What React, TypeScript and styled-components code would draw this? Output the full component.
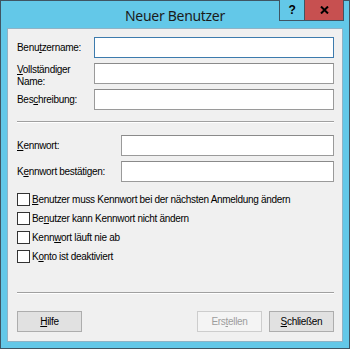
import React from 'react';
import styled, { createGlobalStyle } from 'styled-components';

const GlobalStyle = createGlobalStyle`
  html, body {
    margin: 0;
    padding: 0;
    background: #63c8e8;
  }
  * {
    box-sizing: border-box;
  }
`;

const StyledWindow = styled.div`
  width: 350px;
  height: 349px;
  display: flex;
  flex-direction: column;
  background-color: #63c8e8;
  border: 1px solid #3f5563;
  font-family: 'Liberation Sans', Arial, sans-serif;
  font-size: 10px;
  letter-spacing: -0.3px;
  color: #000;
`;

const StyledTitleBar = styled.div`
  height: 27px;
  display: grid;
  grid-template-columns: 1fr auto 1fr;
  align-items: start;
`;

const StyledTitle = styled.div`
  grid-column: 2/3;
  font-family: 'Noto Sans', 'Open Sans', sans-serif;
  font-size: 14px;
  letter-spacing: -0.3px;
  line-height: 27px;
  color: #1b1b1b;
  padding-top: 1px;
`;

const StyledControls = styled.div`
  grid-column: 3/4;
  justify-self: end;
  display: flex;
  margin-top: -1px;
  margin-right: 5px;
`;

const StyledHelpControl = styled.div`
  width: 25px;
  height: 21px;
  border: 1px solid #3f5563;
  border-top: none;
  border-right: none;
  background-color: #63c8e8;
  display: flex;
  align-items: center;
  justify-content: center;
  font-family: 'Liberation Sans', Arial, sans-serif;
  font-weight: bold;
  font-size: 12px;
  color: #000;
`;

const StyledCloseControl = styled.div`
  width: 40px;
  height: 21px;
  border: 1px solid #3f5563;
  border-top: none;
  background-color: #c75050;
  display: flex;
  align-items: center;
  justify-content: center;
`;

const StyledClient = styled.div`
  flex: 1;
  margin: 0 6px 6px 6px;
  border: 1px solid #8fb3c6;
  background-color: #f0f0f0;
  padding: 8px 8px 0 9px;
  display: flex;
  flex-direction: column;
`;

const StyledFieldGrid = styled.div<{ $labelWidth: number }>`
  display: grid;
  grid-template-columns: ${(p) => p.$labelWidth}px 1fr;
  grid-auto-rows: 21px;
  row-gap: 5px;
`;

const StyledLabel = styled.label<{ $top?: boolean }>`
  align-self: ${(p) => (p.$top ? 'start' : 'center')};
  line-height: 12px;
  margin-top: ${(p) => (p.$top ? '1px' : '0')};
`;

const StyledInput = styled.div<{ $focused?: boolean }>`
  height: 21px;
  background-color: #fff;
  border: 1px solid ${(p) => (p.$focused ? '#3d7bad' : '#9a9a9a')};
  border-top-color: ${(p) => (p.$focused ? '#3d7bad' : '#8a8a8a')};
`;

const StyledSeparator = styled.div<{ $top: number }>`
  margin-top: ${(p) => p.$top}px;
  height: 2px;
  border-top: 1px solid #a0a0a0;
  border-bottom: 1px solid #fff;
`;

const StyledCheckList = styled.div`
  margin-top: 8px;
  display: flex;
  flex-direction: column;
`;

const StyledCheckRow = styled.label`
  height: 19px;
  display: flex;
  align-items: center;
  gap: 2px;
`;

const StyledCheckbox = styled.span`
  width: 13px;
  height: 13px;
  border: 1px solid #333;
  background-color: #fff;
`;

const StyledButtonRow = styled.div`
  margin-top: 17px;
  display: flex;
  gap: 7px;
`;

const StyledButton = styled.button<{ $push?: boolean }>`
  width: 65px;
  height: 21px;
  margin-left: ${(p) => (p.$push ? 'auto' : '0')};
  padding: 0;
  background-color: #e1e1e1;
  border: 1px solid #adadad;
  font-family: inherit;
  font-size: 10px;
  letter-spacing: -0.3px;
  color: #000;
  &:disabled {
    background-color: #f4f4f4;
    border-color: #cdcdcd;
    color: #9d9d9d;
  }
`;

const Key = styled.span`
  text-decoration: underline;
`;

const App: React.FunctionComponent = () => {
  return (
    <>
      <GlobalStyle />
      <StyledWindow>
        <StyledTitleBar>
          <StyledTitle>Neuer Benutzer</StyledTitle>
          <StyledControls>
            <StyledHelpControl>?</StyledHelpControl>
            <StyledCloseControl>
              <svg width="9" height="8" viewBox="0 0 9 8">
                <path d="M1 0.5 L8 7.5 M8 0.5 L1 7.5" stroke="#000" strokeWidth="2" />
              </svg>
            </StyledCloseControl>
          </StyledControls>
        </StyledTitleBar>
        <StyledClient>
          <StyledFieldGrid $labelWidth={77}>
            <StyledLabel>
              Benu<Key>t</Key>zername:
            </StyledLabel>
            <StyledInput $focused />
            <StyledLabel $top>
              <Key>V</Key>ollständiger
              <br />
              Name:
            </StyledLabel>
            <StyledInput />
            <StyledLabel>
              Bes<Key>c</Key>hreibung:
            </StyledLabel>
            <StyledInput />
          </StyledFieldGrid>
          <StyledSeparator $top={11} />
          <StyledFieldGrid $labelWidth={104} style={{ marginTop: 12 }}>
            <StyledLabel>
              <Key>K</Key>ennwort:
            </StyledLabel>
            <StyledInput />
            <StyledLabel>
              K<Key>e</Key>nnwort bestätigen:
            </StyledLabel>
            <StyledInput />
          </StyledFieldGrid>
          <StyledCheckList>
            <StyledCheckRow>
              <StyledCheckbox />
              <span>
                <Key>B</Key>enutzer muss Kennwort bei der nächsten Anmeldung ändern
              </span>
            </StyledCheckRow>
            <StyledCheckRow>
              <StyledCheckbox />
              <span>
                Be<Key>n</Key>utzer kann Kennwort nicht ändern
              </span>
            </StyledCheckRow>
            <StyledCheckRow>
              <StyledCheckbox />
              <span>
                Kenn<Key>w</Key>ort läuft nie ab
              </span>
            </StyledCheckRow>
            <StyledCheckRow>
              <StyledCheckbox />
              <span>
                K<Key>o</Key>nto ist deaktiviert
              </span>
            </StyledCheckRow>
          </StyledCheckList>
          <StyledSeparator $top={26} />
          <StyledButtonRow>
            <StyledButton>
              <Key>H</Key>ilfe
            </StyledButton>
            <StyledButton $push disabled>
              Ers<Key>t</Key>ellen
            </StyledButton>
            <StyledButton>
              <Key>S</Key>chließen
            </StyledButton>
          </StyledButtonRow>
        </StyledClient>
      </StyledWindow>
    </>
  );
};

export default App;
